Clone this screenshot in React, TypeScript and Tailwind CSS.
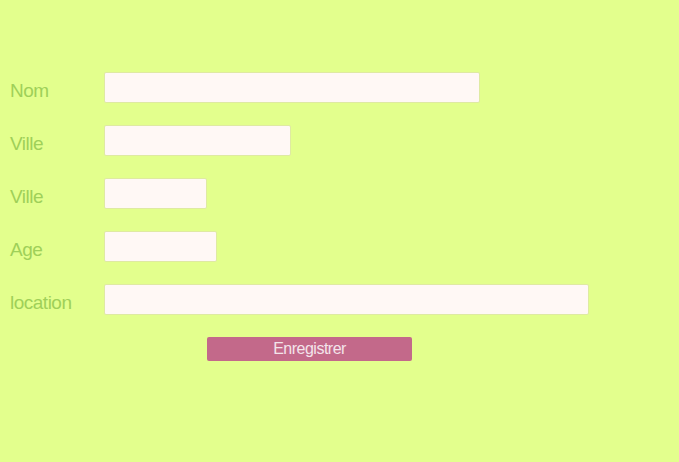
import React from "react";

const fields = [
  { label: "Nom", width: "w-[376px]" },
  { label: "Ville", width: "w-[187px]" },
  { label: "Ville", width: "w-[103px]" },
  { label: "Age", width: "w-[113px]" },
  { label: "location", width: "w-[485px]" },
];

const App = () => {
  return (
    <main
      className="w-[679px] h-[462px] bg-[#e3ff8d] pt-[72px]"
      style={{ fontFamily: '"Liberation Sans", Arial, sans-serif' }}
    >
      <form className="flex flex-col gap-[22px]" onSubmit={(e) => e.preventDefault()}>
        {fields.map((f, i) => (
          <div key={i} className="flex items-center">
            <label className="w-[104px] pl-[10px] mt-[7px] text-[19px] leading-[22px] tracking-[-0.5px] text-[#9fd059]">
              {f.label}
            </label>
            <input
              type="text"
              className={`${f.width} h-[31px] rounded-[2px] border border-[#dfeaa2] bg-[#fff8f5] outline-none`}
            />
          </div>
        ))}
        <div className="pl-[207px]">
          <button
            type="submit"
            className="w-[205px] h-[24px] rounded-[2px] bg-[#c3698a] text-[16px] leading-[24px] tracking-[-0.5px] text-[#f3e4ea]"
          >
            Enregistrer
          </button>
        </div>
      </form>
    </main>
  );
};

export default App;
